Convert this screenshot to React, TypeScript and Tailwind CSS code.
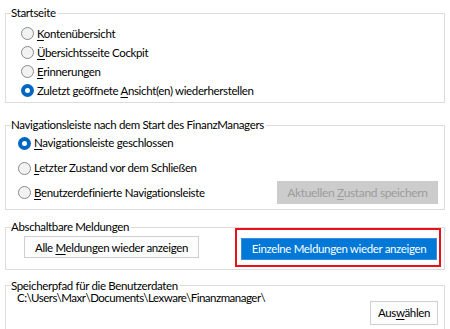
import type { ReactNode } from "react";

const FONT = { fontFamily: 'Lato, "Noto Sans", sans-serif' };

function Group({
  title,
  className,
  children,
}: {
  title: string;
  className?: string;
  children: ReactNode;
}) {
  return (
    <fieldset className={`border border-[#dcdcdc] px-[5px] ${className ?? ""}`}>
      <legend className="px-0 pr-[2px] text-[11.5px] leading-[12px] text-black">{title}</legend>
      {children}
    </fieldset>
  );
}

function Radio({ checked, children }: { checked?: boolean; children: ReactNode }) {
  return (
    <div className="flex items-center gap-[3px]">
      {checked ? (
        <span className="flex h-[13px] w-[13px] items-center justify-center rounded-full bg-[#0067c0]">
          <span className="h-[5px] w-[5px] rounded-full bg-white" />
        </span>
      ) : (
        <span className="h-[13px] w-[13px] rounded-full border border-[#8a8a8a] bg-[#f2f2f2]" />
      )}
      <span className="whitespace-nowrap text-[11.5px] leading-4 text-black">{children}</span>
    </div>
  );
}

const U = ({ children }: { children: ReactNode }) => <span className="underline underline-offset-2">{children}</span>;

export default function App() {
  return (
    <div className="h-[329px] w-[450px] overflow-hidden bg-white px-[5px] pt-[7px] tracking-[-0.35px]" style={FONT}>
      {/* Startseite */}
      <Group title="Startseite" className="pb-[2px] pt-[5px]">
        <div className="flex flex-col pl-[10px]">
          <div className="flex h-[19px] items-center">
            <Radio><U>K</U>ontenübersicht</Radio>
          </div>
          <div className="flex h-[19px] items-center">
            <Radio><U>Ü</U>bersichtsseite Cockpit</Radio>
          </div>
          <div className="flex h-[19px] items-center">
            <Radio><U>E</U>rinnerungen</Radio>
          </div>
          <div className="flex h-[19px] items-center">
            <Radio checked>Zuletzt geöffnete <U>A</U>nsicht(en) wiederherstellen</Radio>
          </div>
        </div>
      </Group>

      {/* Navigationsleiste */}
      <Group title="Navigationsleiste nach dem Start des FinanzManagers" className="mt-[16px] pb-[5px] pt-[2px]">
        <div className="flex flex-col pl-[7px]">
          <div className="flex h-[20px] items-center">
            <Radio checked><U>N</U>avigationsleiste geschlossen</Radio>
          </div>
          <div className="mt-[5px] flex h-[20px] items-center">
            <Radio><U>L</U>etzter Zustand vor dem Schließen</Radio>
          </div>
          <div className="mt-[3px] flex h-[23px] items-center justify-between">
            <Radio><U>B</U>enutzerdefinierte Navigationsleiste</Radio>
            <button className="mr-[1px] h-[23px] w-[161px] whitespace-nowrap bg-[#cccccc] text-[12px] text-[#9c9c9c]">
              Aktuellen <U>Z</U>ustand speichern
            </button>
          </div>
        </div>
      </Group>

      {/* Abschaltbare Meldungen */}
      <Group title="Abschaltbare Meldungen" className="mt-[11px] pb-[9px] pt-[2px]">
        <div className="flex items-center justify-between pl-[13px]">
          <button className="h-[22px] w-[175px] whitespace-nowrap border border-[#cfcfcf] bg-[#fdfdfd] text-[11.5px] text-black">
            Alle <U>M</U>eldungen wieder anzeigen
          </button>
          <div className="relative mr-[2px]">
            <button className="h-[22px] w-[196px] whitespace-nowrap border border-[#3a8ee0] bg-[#0078d7] text-[11.5px] text-white">
              Einzelne Meldungen wieder anzeigen
            </button>
            <div className="pointer-events-none absolute -bottom-[7px] -left-[6px] -right-[4px] -top-[7px] border-2 border-[#e8101a]" />
          </div>
        </div>
      </Group>

      {/* Speicherpfad */}
      <Group title="Speicherpfad für die Benutzerdaten" className="mt-[10px] h-[80px]">
        <div className="flex flex-col">
          <div className="whitespace-nowrap pl-[6px] text-[11.5px] leading-[12px] tracking-[-0.5px] text-black">
            C:\Users\Maxr\Documents\Lexware\Finanzmanager\
          </div>
          <div className="-mt-[3px] flex justify-end">
            <button className="mr-[1px] h-[24px] w-[68px] whitespace-nowrap border border-[#cfcfcf] bg-[#fdfdfd] text-[11.5px] text-black">
              Aus<U>w</U>ählen
            </button>
          </div>
        </div>
      </Group>
    </div>
  );
}
